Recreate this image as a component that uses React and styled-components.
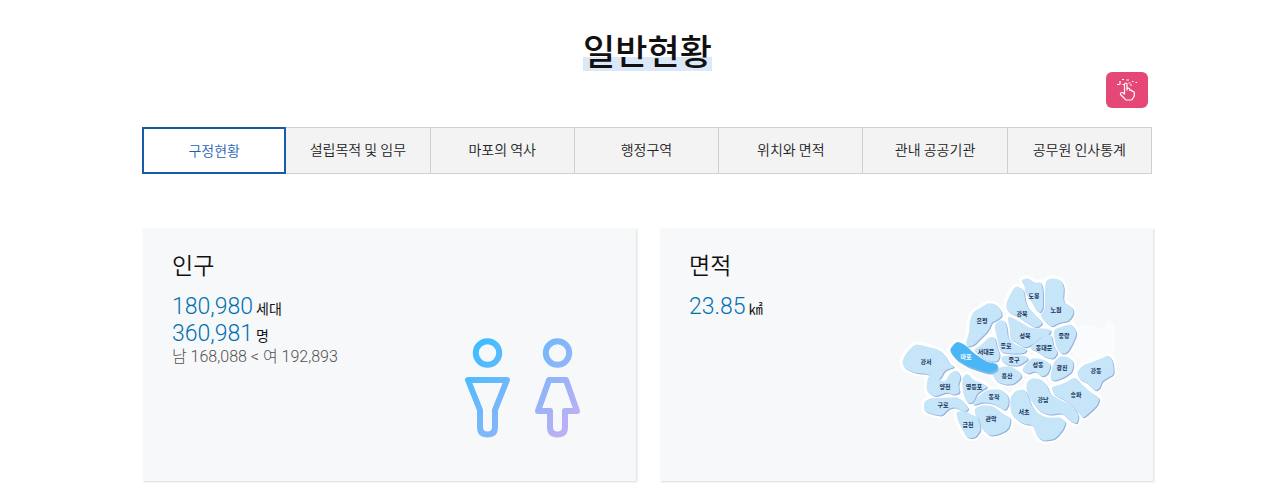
import React from "react";
import styled, { createGlobalStyle } from "styled-components";

const GlobalStyle = createGlobalStyle`
  * { box-sizing: border-box; }
  body {
    margin: 0;
    background: #fff;
    color: #111;
    font-family: "Noto Sans CJK KR", sans-serif;
  }
`;

const Page = styled.main`
  padding: 28px 127px 8px 142px;
`;

const Header = styled.header`
  display: flex;
  flex-direction: column;
  align-items: center;
`;

const Title = styled.h1`
  margin: 0;
  font-size: 35px;
  line-height: 44px;
  font-weight: 500;
  background: linear-gradient(transparent 29px, #dae8f8 29px, #dae8f8 43px, transparent 43px);
`;

const TouchButton = styled.button`
  align-self: flex-end;
  display: flex;
  align-items: center;
  justify-content: center;
  width: 42px;
  height: 36px;
  margin-right: 5px;
  padding: 0;
  border: 0;
  border-radius: 6px;
  background: #e54876;
`;

const Tabs = styled.nav`
  display: grid;
  grid-template-columns: repeat(7, 1fr);
  margin: 19px 1px 54px 0;
`;

const Tab = styled.a`
  display: flex;
  align-items: center;
  justify-content: center;
  height: 47px;
  padding-bottom: 4px;
  border: 1px solid #d0d0d0;
  border-left-width: 0;
  background: #f3f3f3;
  color: #222;
  font-size: 14px;
  font-weight: 350;
  line-height: 20px;
  white-space: nowrap;
  text-decoration: none;

  &[aria-current] {
    padding-bottom: 2px;
    border: 2px solid #1a5ba6;
    background: #fff;
    color: #1c62b8;
  }
`;

const Cards = styled.div`
  display: grid;
  grid-template-columns: 1fr 1fr;
  gap: 24px;
  padding-left: 1px;
`;

const Card = styled.section`
  display: flex;
  justify-content: space-between;
  min-height: 253px;
  padding: 20px 29px;
  background: #f7f8fa;
  box-shadow: 1px 1px 2px #d8dadd;
`;

const CardTitle = styled.h2`
  margin: 0 0 15px;
  font-size: 23px;
  line-height: 32px;
  font-weight: 350;
`;

const Stat = styled.p`
  margin: 0;
  font-size: 14px;
  font-weight: 400;
  line-height: 27px;
  white-space: nowrap;
`;

const Figure = styled.span`
  color: #0070b4;
  font-family: Roboto, "Noto Sans CJK KR", sans-serif;
  font-size: 23px;
  font-weight: 300;
  line-height: 20px;
`;

const Detail = styled.p`
  margin: 0;
  color: #505050;
  font-family: Roboto, "Noto Sans CJK KR", sans-serif;
  font-size: 16px;
  font-weight: 300;
  line-height: 16px;
  white-space: nowrap;
`;

const PeopleArt = styled.svg`
  flex: none;
  margin: 89px 26px 0 0;
`;

const MapArt = styled.svg`
  flex: none;
  margin: 24px 4px 0 0;
  font-family: "Noto Sans CJK KR", sans-serif;
`;

const TABS = ["구정현황", "설립목적 및 임무", "마포의 역사", "행정구역", "위치와 면적", "관내 공공기관", "공무원 인사통계"];

/* name, label x, label y, outline points */
const DISTRICTS = [
  ["은평", 982, 323, "967,347 966,342 969,333 970,320 973,312 982,307 988,303 995,304 1001,310 1002,316 997,320 992,322 990,327 987,332 980,339 974,345"],
  ["서대문", 986, 354, "973,350 980,346 989,337 995,337 997,347 1000,355 998,361 990,362 981,357"],
  ["종로", 1006, 348, "994,325 1000,320 1005,321 1007,328 1008,339 1016,345 1027,349 1025,353 1013,354 1000,352 998,342"],
  ["중구", 1014, 362, "1001,357 1008,355 1027,356 1028,360 1018,366 1008,365 1002,362"],
  ["용산", 1007, 378, "992,374 1000,367 1010,366 1020,372 1022,377 1014,384 1005,385 996,381"],
  ["강북", 1022, 316, "1006,303 1013,289 1017,286 1024,290 1025,300 1028,308 1037,317 1043,323 1037,328 1030,325 1020,318 1007,311"],
  ["도봉", 1034, 298, "1021,280 1028,278 1035,283 1041,282 1043,290 1043,308 1040,313 1035,309 1032,302 1025,293 1025,287"],
  ["노원", 1056, 312, "1045,281 1052,278 1061,280 1064,287 1063,302 1072,307 1074,313 1069,321 1058,323 1052,327 1045,322 1040,315 1045,310"],
  ["성북", 1025, 338, "1007,315 1020,322 1030,328 1051,329 1050,334 1040,338 1032,345 1025,348 1017,343 1010,339 1010,330"],
  ["중랑", 1064, 338, "1053,330 1063,326 1072,324 1077,333 1072,345 1067,353 1061,354 1056,347"],
  ["동대문", 1044, 350, "1029,348 1038,340 1047,334 1052,336 1053,345 1058,353 1053,359 1045,357 1038,352"],
  ["성동", 1038, 367, "1021,370 1031,358 1042,359 1051,364 1048,374 1042,377 1035,371 1028,374"],
  ["광진", 1062, 370, "1050,379 1053,363 1060,356 1068,357 1074,362 1072,372 1063,378 1054,381"],
  ["강동", 1096, 373, "1077,372 1083,365 1093,362 1102,358 1109,355 1113,362 1114,374 1108,378 1102,381 1100,388 1095,391 1087,383 1079,379"],
  ["송파", 1076, 397, "1051,387 1063,384 1075,377 1080,383 1090,392 1100,398 1097,406 1088,414 1083,418 1078,412 1068,402 1054,395"],
  ["강남", 1043, 402, "1026,383 1032,378 1040,379 1047,385 1050,394 1060,400 1072,405 1079,415 1077,424 1070,421 1062,413 1050,415 1040,412 1032,402 1027,393"],
  ["서초", 1024, 414, "1010,398 1015,391 1024,389 1028,395 1031,405 1037,413 1047,418 1060,417 1066,422 1063,430 1055,439 1043,441 1037,437 1033,425 1023,424 1011,415"],
  ["강서", 926, 364, "902,361 907,352 915,344 925,346 940,350 946,357 949,363 955,367 945,370 940,379 935,380 928,374 915,373 904,368"],
  ["양천", 945, 389, "928,376 934,377 945,382 950,373 957,370 961,377 958,385 960,393 953,395 947,392 935,397 926,391"],
  ["영등포", 974, 389, "962,378 967,373 973,380 982,383 988,387 982,390 977,394 973,403 967,403 963,393"],
  ["구로", 943, 407, "924,402 930,398 943,398 957,397 963,401 969,409 964,412 955,407 948,409 942,416 932,414 924,411"],
  ["동작", 994, 399, "972,404 980,395 987,390 1000,389 1008,395 1009,404 1005,411 995,404 983,402 975,405"],
  ["관악", 991, 421, "974,409 982,405 993,406 1003,414 1011,418 1009,429 1000,434 990,436 983,430 977,420"],
  ["금천", 968, 427, "956,412 965,411 972,415 978,417 981,430 975,438 967,438 962,429 958,421"],
];

const MAPO = "949,350 957,341 965,345 975,354 987,362 998,364 997,370 990,373 978,370 968,366 957,360";

/* Closed outline through a point list, with each corner rounded off. */
function roundedPath(points) {
  const p = points.split(" ").map((s) => s.split(",").map(Number));
  const along = (a, b, t) => `${(a[0] + (b[0] - a[0]) * t).toFixed(1)} ${(a[1] + (b[1] - a[1]) * t).toFixed(1)}`;
  return p
    .map((q, i) => {
      const before = p[(i + p.length - 1) % p.length];
      const after = p[(i + 1) % p.length];
      return `${i ? "L" : "M"}${along(q, before, 0.35)}Q${q[0]} ${q[1]} ${along(q, after, 0.35)}`;
    })
    .join("") + "Z";
}

function TouchIcon() {
  return (
    <svg width="24" height="24" viewBox="0 0 24 24" fill="none" stroke="#fff" strokeWidth="1.2" strokeLinejoin="round" aria-hidden="true">
      <path d="M9.500 16V6.500Q9.500 5 10.800 5T12 6.500V12V10.500Q14.500 9.500 14.800 11.500V12.500Q17 11.500 17.300 13.500Q19.300 13 19.300 15V18L17.500 21Q17 22 16 22H11.500Q10.500 22 10 21L5.500 16.500Q5 14.300 7.500 14.500Z" />
      <path d="M2 6.500H4.500M5 3V6.500M7 1.500H9M7.500 6.500H9M11.500 2H14M13.500 5H15.500M15 7H17M17 3.500H18.500M20.500 4.500H22" />
    </svg>
  );
}

function People() {
  return (
    <PeopleArt width="118" height="102" viewBox="463 337 118 102" fill="none" role="img" aria-label="남녀 인구">
      <defs>
        <linearGradient id="people" gradientUnits="userSpaceOnUse" x1="474" y1="350" x2="568" y2="430">
          <stop offset="0" stopColor="#40bdff" />
          <stop offset="1" stopColor="#bdb0f4" />
        </linearGradient>
      </defs>
      <g stroke="url(#people)" strokeWidth="6" strokeLinejoin="round">
        <circle cx="487.500" cy="353" r="11.700" />
        <circle cx="557.500" cy="353" r="11.700" />
        <path d="M468 380H507L495 410V427Q495 434.500 487.500 434.500T480 427V410Z" />
        <path d="M549 380H566L577 411H565V427Q565 434.500 557.500 434.500T550 427V411H538Z" />
      </g>
    </PeopleArt>
  );
}

function SeoulMap() {
  return (
    <MapArt width="222" height="172" viewBox="898 272 222 172" role="img" aria-label="서울시 자치구 지도">
      <g fill="#fff" stroke="#fff" strokeWidth="6" strokeLinejoin="round">
        {DISTRICTS.map(([name, , , pts]) => <path key={name} d={roundedPath(pts)} />)}
        <path d={roundedPath(MAPO)} />
      </g>
      <path d="M1078 329L1086 325L1103 330L1108 321L1114 324V352L1103 357L1079 361L1072 350Z" fill="#fafbfc" stroke="#fff" strokeWidth="1" />
      {DISTRICTS.map(([name, , , pts]) => (
        <g key={name}>
          <path d={roundedPath(pts)} fill="#98b3dd" transform="translate(1 1)" />
          <path d={roundedPath(pts)} fill="#c6e5f9" />
        </g>
      ))}
      <path d={roundedPath(MAPO)} fill="#8bbbe3" transform="translate(1 2)" />
      <path d={roundedPath(MAPO)} fill="#4bb6f5" />
      <g fontSize="6" fontWeight="700" textAnchor="middle" fill="#12305a">
        {DISTRICTS.map(([name, x, y]) => <text key={name} x={x} y={y}>{name}</text>)}
        <text x="966" y="359" fill="#fff">마포</text>
      </g>
    </MapArt>
  );
}

export default function App() {
  return (
    <>
      <GlobalStyle />
      <Page>
        <Header>
          <Title>일반현황</Title>
          <TouchButton type="button" aria-label="터치"><TouchIcon /></TouchButton>
        </Header>
        <Tabs>
          {TABS.map((label, i) => (
            <Tab key={label} href="#" aria-current={i === 0 ? "page" : undefined}>{label}</Tab>
          ))}
        </Tabs>
        <Cards>
          <Card>
            <div>
              <CardTitle>인구</CardTitle>
              <Stat><Figure>180,980</Figure> 세대</Stat>
              <Stat><Figure>360,981</Figure> 명</Stat>
              <Detail>남 168,088 &lt; 여 192,893</Detail>
            </div>
            <People />
          </Card>
          <Card>
            <div>
              <CardTitle>면적</CardTitle>
              <Stat><Figure>23.85</Figure> ㎢</Stat>
            </div>
            <SeoulMap />
          </Card>
        </Cards>
      </Page>
    </>
  );
}
